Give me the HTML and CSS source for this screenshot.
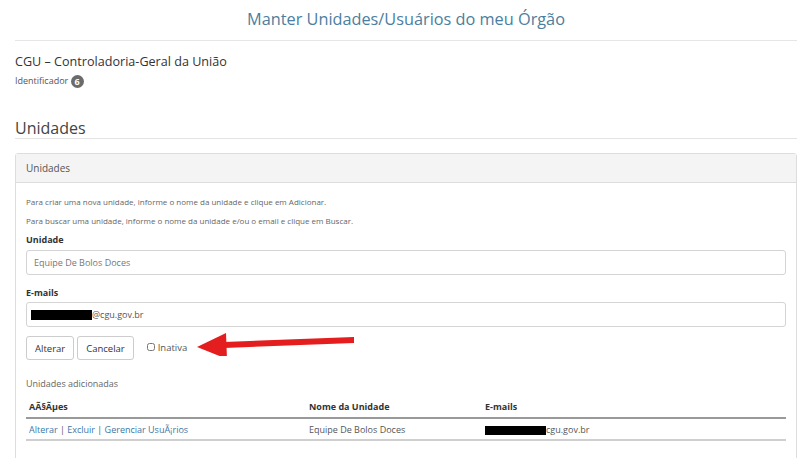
FILE: index.html
```html
<!DOCTYPE html>
<html>
<head>
  <meta charset="utf-8">
  <title>Manter Unidades/Usuários do meu Órgão</title>
  <link rel="stylesheet" href="styles.css">
</head>
<body>
  <div class="page">
    <h1 class="page-title">Manter Unidades/Usuários do meu Órgão</h1>

    <div class="orgao">
      <div class="orgao-nome">CGU – Controladoria-Geral da União</div>
      <div class="orgao-id">Identificador <span class="badge">6</span></div>
    </div>

    <h2 class="section-title">Unidades</h2>

    <div class="panel">
      <div class="panel-heading">Unidades</div>
      <div class="panel-body">
        <p class="help">Para criar uma nova unidade, informe o nome da unidade e clique em Adicionar.</p>
        <p class="help">Para buscar uma unidade, informe o nome da unidade e/ou o email e clique em Buscar.</p>

        <label class="field-label" for="unidade">Unidade</label>
        <input class="field" id="unidade" type="text" placeholder="Equipe De Bolos Doces">

        <label class="field-label" for="emails">E-mails</label>
        <div class="field email-field"><span class="redacted"></span>@cgu.gov.br</div>

        <div class="actions">
          <button class="btn">Alterar</button>
          <button class="btn">Cancelar</button>
          <label class="check"><input type="checkbox"> Inativa</label>
          <svg class="arrow" width="160" height="30" viewBox="0 0 160 30">
            <polygon points="27,16 157,11 157,17 27,22" fill="#e41e1e"/>
            <polygon points="0,21 29,7 30,33" fill="#e41e1e"/>
          </svg>
        </div>

        <div class="added-title">Unidades adicionadas</div>
        <table class="grid">
          <thead>
            <tr>
              <th class="col-acoes">AÃ§Ãµes</th>
              <th class="col-nome">Nome da Unidade</th>
              <th>E-mails</th>
            </tr>
          </thead>
          <tbody>
            <tr>
              <td><a href="#">Alterar</a> | <a href="#">Excluir</a> | <a href="#">Gerenciar UsuÃ¡rios</a></td>
              <td>Equipe De Bolos Doces</td>
              <td><span class="redacted redacted-row"></span>cgu.gov.br</td>
            </tr>
          </tbody>
        </table>
      </div>
    </div>
  </div>
</body>
</html>
```

FILE: styles.css
```css
body {
  margin: 0;
  padding: 0;
  font-family: "Open Sans", "Liberation Sans", sans-serif;
  color: #333333;
  background-color: #ffffff;
}

.page {
  padding: 0 3px 0 15px;
}

.page-title {
  margin: 0;
  padding: 8px 0 10px;
  font-size: 16.3px;
  font-weight: normal;
  color: #4b7ea0;
  text-align: center;
  border-bottom: 1px solid #e6e6e6;
}

.orgao {
  padding-top: 12px;
}

.orgao-nome {
  font-size: 12.6px;
  line-height: 18px;
}

.orgao-id {
  margin-top: 3px;
  font-size: 9px;
  color: #555555;
  line-height: 14px;
}

.badge {
  display: inline-block;
  width: 13px;
  height: 13px;
  border-radius: 50%;
  background-color: #6b6b6b;
  color: #ffffff;
  font-size: 9px;
  font-weight: bold;
  line-height: 13px;
  text-align: center;
  vertical-align: middle;
}

.section-title {
  margin: 30px 0 0;
  padding-bottom: 0;
  font-size: 16px;
  line-height: 20px;
  font-weight: normal;
  color: #444444;
  border-bottom: 1px solid #e3e3e3;
}

.panel {
  margin-top: 14px;
  border: 1px solid #dddddd;
  border-radius: 3px;
}

.panel-heading {
  background-color: #f4f4f4;
  border-bottom: 1px solid #dddddd;
  padding: 7px 10px;
  font-size: 10px;
  color: #555555;
  line-height: 14px;
}

.panel-body {
  padding: 13px 10px 40px;
}

.help {
  margin: 0 0 8px;
  font-size: 8px;
  line-height: 11px;
  color: #666666;
}

.field-label {
  display: block;
  margin-top: 6px;
  font-size: 9px;
  font-weight: bold;
  color: #333333;
  line-height: 12px;
}

.field {
  display: block;
  box-sizing: border-box;
  width: 100%;
  height: 25px;
  margin: 4px 0 12px;
  padding: 0 7px;
  border: 1px solid #d4d4d4;
  border-radius: 3px;
  font-family: inherit;
  font-size: 9px;
  color: #555555;
}

.field::placeholder {
  color: #777777;
}

.email-field {
  display: flex;
  align-items: center;
  padding-left: 4px;
  margin-top: 3px;
  margin-bottom: 9px;
}

.redacted {
  display: inline-block;
  width: 61px;
  height: 10px;
  background-color: #000000;
}

.redacted-row {
  width: 61px;
  height: 9px;
  vertical-align: middle;
}

.actions {
  display: flex;
  align-items: center;
  gap: 3px;
}

.btn {
  height: 24px;
  padding: 0 8px;
  background-color: #ffffff;
  border: 1px solid #cccccc;
  border-radius: 3px;
  font-family: inherit;
  font-size: 9.5px;
  color: #333333;
}

.check {
  display: flex;
  align-items: center;
  gap: 3px;
  margin-left: 10px;
  margin-top: -2px;
  font-size: 9.5px;
  color: #555555;
}

.check input {
  width: 8px;
  height: 8px;
  margin: 0;
}

.arrow {
  margin-left: 7px;
  margin-top: -14px;
}

.added-title {
  margin-top: 17px;
  font-size: 9px;
  color: #666666;
}

.grid {
  width: 100%;
  margin-top: 7px;
  border-collapse: collapse;
  font-size: 9px;
}

.grid th {
  text-align: left;
  padding: 3px 3px 4px;
  border-bottom: 2px solid #999999;
  color: #333333;
}

.grid td {
  padding: 4px 3px 3px;
  border-bottom: 2px solid #cfcfcf;
  color: #555555;
}

.col-acoes {
  width: 274px;
}

.col-nome {
  width: 170px;
}

.grid a {
  color: #3b77a8;
  text-decoration: none;
}
```
